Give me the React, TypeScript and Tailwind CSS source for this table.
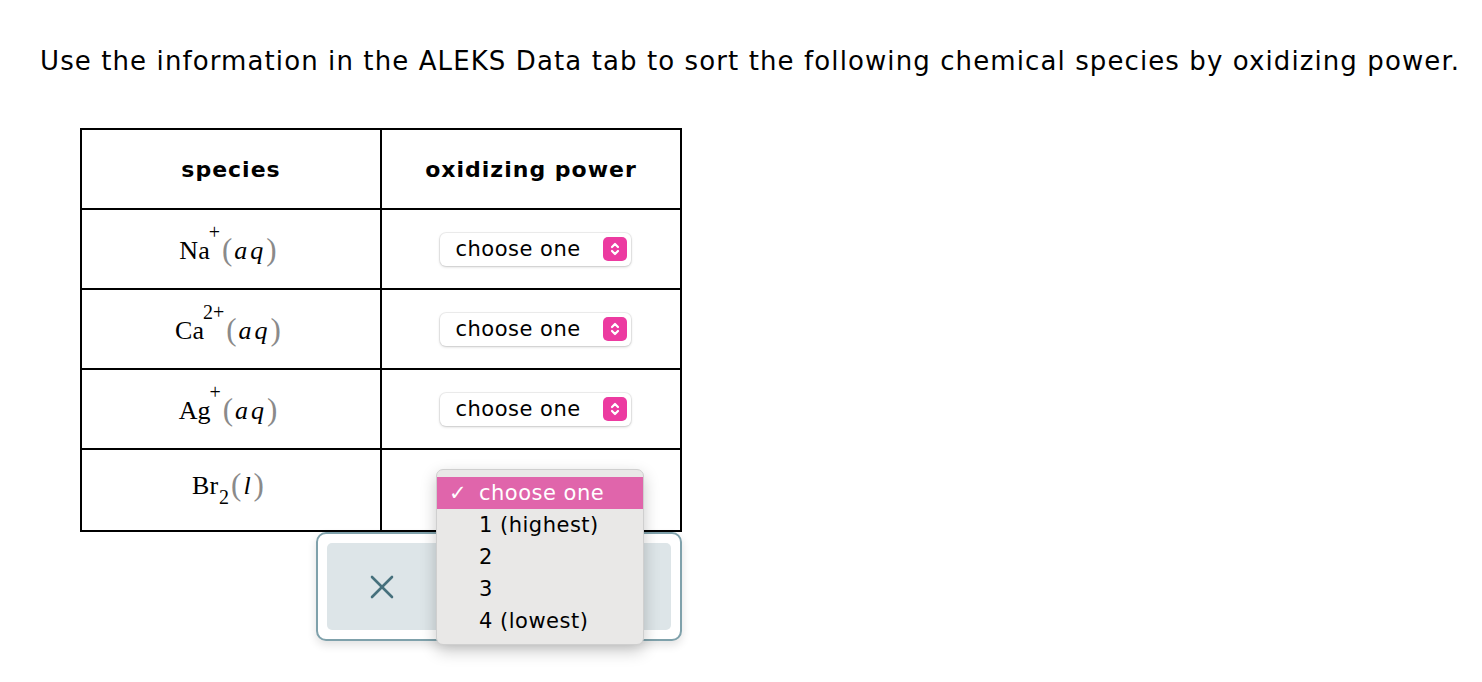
import React from "react";

const serif = { fontFamily: '"Liberation Serif", "Times New Roman", serif' };

function Paren({ children }: { children: React.ReactNode }) {
  return (
    <span className="inline-flex items-baseline">
      <span className="text-[#8a8a8a] text-[31px] leading-none relative top-[1px]" style={{ ...serif }}>(</span>
      <span className="italic px-[2px] tracking-[3px]">{children}</span>
      <span className="text-[#8a8a8a] text-[31px] leading-none relative top-[1px] -ml-[2px]" style={{ ...serif }}>)</span>
    </span>
  );
}

function Species({ base, sup, sub, state }: { base: string; sup?: string; sub?: string; state: string }) {
  return (
    <span className="inline-flex items-baseline text-[26px] text-black leading-none -ml-[6px]" style={serif}>
      <span>{base}</span>
      {sup && <span className="relative -top-[20px] text-[20px] -ml-[1px] mr-[2px]">{sup}</span>}
      {sub && <span className="relative top-[10px] text-[20px] ml-[1px] mr-[2px]">{sub}</span>}
      <Paren>{state}</Paren>
    </span>
  );
}

function Select() {
  return (
    <div className="inline-flex items-center justify-between w-[191px] h-[33px] bg-white rounded-[6px] pl-[16px] pr-[4px] shadow-[0_0_0_1px_rgba(0,0,0,0.06),0_1px_3px_rgba(0,0,0,0.18)]">
      <span className="text-[21px] text-black leading-none tracking-[0.5px]">choose one</span>
      <span className="w-[24px] h-[24px] rounded-[5px] bg-[#ec3aa0] flex items-center justify-center">
        <svg width="12" height="16" viewBox="0 0 12 16" fill="none" stroke="white" strokeWidth="2.2" strokeLinecap="round" strokeLinejoin="round">
          <path d="M3 6 L6 3 L9 6" />
          <path d="M3 10 L6 13 L9 10" />
        </svg>
      </span>
    </div>
  );
}

export default function App() {
  const rows = [
    { base: "Na", sup: "+", state: "aq" },
    { base: "Ca", sup: "2+", state: "aq" },
    { base: "Ag", sup: "+", state: "aq" },
  ];
  return (
    <div className="w-[1482px] h-[682px] bg-white relative overflow-hidden" style={{ fontFamily: '"DejaVu Sans", Verdana, sans-serif' }}>
      <div className="pt-[44px] pl-[40px] text-[26px] leading-[34px] text-black tracking-[1.1px] whitespace-nowrap">
        Use the information in the ALEKS Data tab to sort the following chemical species by oxidizing power.
      </div>
      <div className="ml-[80px] mt-[50px] relative w-[602px]">
        <table className="border-collapse border-2 border-black w-[602px]">
          <tbody>
            <tr className="h-[80px]">
              <th className="w-[300px] border-2 border-black text-[22px] font-bold tracking-[1px]">species</th>
              <th className="border-2 border-black text-[22px] font-bold tracking-[1px]">oxidizing power</th>
            </tr>
            {rows.map((r, i) => (
              <tr key={i} className="h-[80px]">
                <td className="border-2 border-black text-center">
                  <Species base={r.base} sup={r.sup} state={r.state} />
                </td>
                <td className="border-2 border-black text-center pl-[8px]">
                  <Select />
                </td>
              </tr>
            ))}
            <tr className="h-[82px]">
              <td className="border-2 border-black text-center align-top pt-[18px]">
                <Species base="Br" sub="2" state="l" />
              </td>
              <td className="border-2 border-black"></td>
            </tr>
          </tbody>
        </table>
        <div className="ml-[236px] w-[366px] h-[109px] rounded-[10px] border-2 border-[#7fa1ab] bg-white p-[9px] shadow-[0_4px_10px_rgba(0,0,0,0.12)]">
          <div className="h-full rounded-[5px] bg-[#dde5e8] flex items-center pl-[42px]">
            <svg width="26" height="26" viewBox="0 0 26 26" stroke="#46707c" strokeWidth="2.6" strokeLinecap="round">
              <path d="M3 3 L23 23" />
              <path d="M23 3 L3 23" />
            </svg>
          </div>
        </div>
        <div className="absolute left-[356px] top-[341px] w-[208px] h-[176px] rounded-[7px] bg-[#e9e8e7] border border-[#cfcfcf] shadow-[0_6px_16px_rgba(0,0,0,0.22)] pt-[7px] text-[21px] leading-[32px] text-black tracking-[0.5px]">
          <div className="h-[32px] bg-[#e065ab] text-white flex items-center">
            <span className="w-[42px] pl-[12px] font-bold">✓</span>
            <span>choose one</span>
          </div>
          <div className="pl-[42px]">1 (highest)</div>
          <div className="pl-[42px]">2</div>
          <div className="pl-[42px]">3</div>
          <div className="pl-[42px]">4 (lowest)</div>
        </div>
      </div>
    </div>
  );
}
